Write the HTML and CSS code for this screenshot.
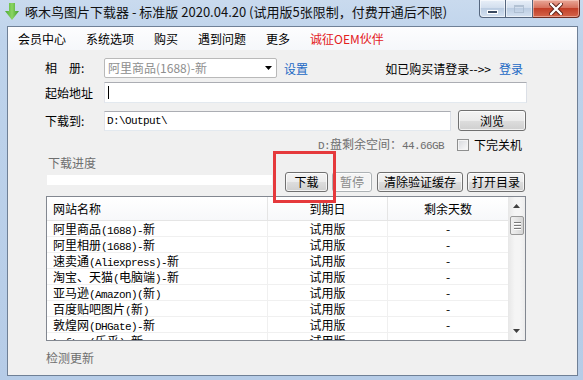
FILE: index.html
```html
<!DOCTYPE html>
<html lang="zh-CN">
<head>
<meta charset="utf-8">
<title>啄木鸟图片下载器</title>
<link rel="stylesheet" href="styles.css">
</head>
<body>
<div class="window">
  <div class="titlebar">
    <svg class="app-icon" width="14" height="18" viewBox="0 0 14 18">
      <defs>
        <linearGradient id="g" x1="0" y1="0" x2="1" y2="0">
          <stop offset="0" stop-color="#4aa832"/>
          <stop offset="0.5" stop-color="#8bd563"/>
          <stop offset="1" stop-color="#3f9c2a"/>
        </linearGradient>
      </defs>
      <path d="M4 0 H10 V8 H14 L7 17 L0 8 H4 Z" fill="url(#g)"/>
    </svg>
    <div class="title">啄木鸟图片下载器 - 标准版 2020.04.20 (试用版5张限制，付费开通后不限)</div>
    <div class="caption">
      <div class="cbtn min"><span class="min-glyph"></span></div>
      <div class="cbtn max"><span class="max-glyph"></span></div>
      <div class="cbtn close">
        <svg width="14" height="12" viewBox="0 0 14 12">
          <path d="M2 1 L12 11 M12 1 L2 11" stroke="#5a2018" stroke-width="4.2" stroke-linecap="round"/>
          <path d="M2 1 L12 11 M12 1 L2 11" stroke="#ffffff" stroke-width="2.4" stroke-linecap="round"/>
        </svg>
      </div>
    </div>
  </div>

  <div class="client">
    <div class="menubar">
      <span class="menu-item">会员中心</span>
      <span class="menu-item">系统选项</span>
      <span class="menu-item">购买</span>
      <span class="menu-item">遇到问题</span>
      <span class="menu-item">更多</span>
      <span class="menu-item red">诚征OEM伙伴</span>
    </div>

    <div class="main">
      <div class="row r1">
        <span class="lbl">相　册:</span>
        <div class="combo">
          <span class="combo-text">阿里商品(1688)-新</span>
          <svg class="caret" width="7" height="4" viewBox="0 0 7 4"><path d="M0 0 H7 L3.5 4 Z" fill="#000"/></svg>
        </div>
        <span class="link set">设置</span>
        <span class="spacer"></span>
        <span class="buy">如已购买请登录--&gt;&gt;</span>
        <span class="link login">登录</span>
      </div>

      <div class="row r2">
        <span class="lbl">起始地址</span>
        <div class="input wide"><span class="cursor"></span></div>
      </div>

      <div class="row r3">
        <span class="lbl">下载到:</span>
        <div class="input path"><span class="m">D:\Output\</span></div>
        <div class="btn browse">浏览</div>
      </div>

      <div class="row r4">
        <span class="disk"><span class="m">D:</span>盘剩余空间：<span class="m">44.66GB</span></span>
        <span class="chk"></span>
        <span class="chk-lbl">下完关机</span>
      </div>

      <div class="row r5">
        <div class="prog-col">
          <div class="prog-lbl">下载进度</div>
          <div class="prog-bar"></div>
        </div>
        <div class="btns">
          <div class="btn b-dl">下载</div>
          <div class="btn b-pause disabled">暂停</div>
          <div class="btn b-clear">清除验证缓存</div>
          <div class="btn b-open">打开目录</div>
        </div>
      </div>

      <div class="list">
        <div class="grid">
          <div class="hdr">
            <div class="c1">网站名称</div>
            <div class="c2">到期日</div>
            <div class="c3">剩余天数</div>
          </div>
          <div class="rows">
            <div class="lrow"><div class="c1">阿里商品<span class="m">(1688)-</span>新</div><div class="c2">试用版</div><div class="c3">-</div></div>
            <div class="lrow"><div class="c1">阿里相册<span class="m">(1688)-</span>新</div><div class="c2">试用版</div><div class="c3">-</div></div>
            <div class="lrow"><div class="c1">速卖通<span class="m">(Aliexpress)-</span>新</div><div class="c2">试用版</div><div class="c3">-</div></div>
            <div class="lrow"><div class="c1">淘宝、天猫<span class="m">(</span>电脑端<span class="m">)-</span>新</div><div class="c2">试用版</div><div class="c3">-</div></div>
            <div class="lrow"><div class="c1">亚马逊<span class="m">(Amazon)(</span>新<span class="m">)</span></div><div class="c2">试用版</div><div class="c3">-</div></div>
            <div class="lrow"><div class="c1">百度贴吧图片<span class="m">(</span>新<span class="m">)</span></div><div class="c2">试用版</div><div class="c3">-</div></div>
            <div class="lrow"><div class="c1">敦煌网<span class="m">(DHGate)-</span>新</div><div class="c2">试用版</div><div class="c3">-</div></div>
            <div class="lrow"><div class="c1"><span class="m">Lofter(</span>乐乎<span class="m">)-</span>新</div><div class="c2">试用版</div><div class="c3">-</div></div>
          </div>
        </div>
        <div class="vscroll">
          <div class="sarrow up"><svg width="7" height="4" viewBox="0 0 7 4"><path d="M0 4 H7 L3.5 0 Z" fill="#404040"/></svg></div>
          <div class="thumb"><span></span><span></span><span></span></div>
          <div class="strack"></div>
          <div class="sarrow down"><svg width="7" height="4" viewBox="0 0 7 4"><path d="M0 0 H7 L3.5 4 Z" fill="#404040"/></svg></div>
        </div>
      </div>

      <div class="footer">检测更新</div>
    </div>
  </div>

  <div class="highlight"></div>
</div>
</body>
</html>
```

FILE: styles.css
```css
* { box-sizing: border-box; }
html, body { margin: 0; padding: 0; }
body {
  width: 583px;
  height: 380px;
  overflow: hidden;
  font-family: "Noto Sans CJK SC", "Noto Sans", sans-serif;
  font-size: 12px;
  color: #000;
  background: #b9d0ea;
}
.m {
  font-family: "Liberation Mono", "DejaVu Sans Mono", monospace;
  font-size: 11px;
  letter-spacing: -0.6px;
}
.window {
  position: relative;
  width: 583px;
  height: 380px;
  display: flex;
  flex-direction: column;
  background: linear-gradient(to bottom, #c9daee 0, #bed3eb 40px, #b6cce7 100%);
}

/* title bar */
.titlebar {
  flex: none;
  height: 26px;
  display: flex;
  align-items: flex-start;
}
.app-icon { margin: 3px 0 0 5px; flex: none; }
.title {
  margin-left: 6px;
  font-size: 13px;
  line-height: 24px;
  color: #111;
  white-space: nowrap;
}
.caption {
  margin-left: auto;
  margin-right: 3px;
  display: flex;
  height: 18px;
}
.cbtn {
  height: 18px;
  border: 1px solid #56677f;
  border-top: none;
  display: flex;
  align-items: center;
  justify-content: center;
  background: linear-gradient(to bottom, #e8eff8 0%, #d3dfee 45%, #bccde2 50%, #d5e2f1 100%);
  box-shadow: inset 0 0 0 1px rgba(255,255,255,0.55);
}
.min { width: 26px; border-right: none; border-radius: 0 0 0 4px; }
.max { width: 28px; }
.close {
  width: 47px;
  border-left: none;
  border-color: #6d2c22;
  border-radius: 0 0 4px 0;
  background: linear-gradient(to bottom, #e9a898 0%, #d7725e 45%, #c23f28 50%, #d4654a 100%);
  box-shadow: inset 0 0 0 1px rgba(255,220,210,0.5);
}
.min-glyph {
  width: 11px;
  height: 4px;
  margin-top: 7px;
  background: #3a4a60;
  border: 1px solid #fff;
}
.max-glyph {
  width: 10px;
  height: 8px;
  border: 1px solid #a9b9cc;
  border-top-width: 2px;
  opacity: 0.8;
}

/* client */
.client {
  flex: 1;
  margin: 0 5px 4px 7px;
  border: 1px solid #6f8096;
  background: #f0f0f0;
  display: flex;
  flex-direction: column;
}
.menubar {
  flex: none;
  height: 23px;
  display: flex;
  align-items: center;
  background: linear-gradient(to bottom, #fdfdfe, #f5f7fa);
}
.menu-item {
  padding: 0 10px;
  line-height: 20px;
  white-space: nowrap;
}
.menu-item.red { color: #e3201c; }

.main {
  flex: 1;
  display: flex;
  flex-direction: column;
  padding: 8px 0 0 37px;
}
.row {
  width: 482px;
  display: flex;
  align-items: center;
  white-space: nowrap;
}
.lbl { width: 59px; flex: none; line-height: 16px; }
.link { color: #1b68c4; }

.r1 { height: 20px; padding-right: 4px; }
.combo {
  width: 173px;
  height: 20px;
  border: 1px solid #b9b9b9;
  border-radius: 2px;
  background: #fff;
  display: flex;
  align-items: center;
  padding: 0 4px 0 3px;
}
.combo-text { color: #8e8e8e; flex: 1; line-height: 16px; }
.caret { flex: none; }
.set { margin-left: 7px; }
.spacer { flex: 1; }
.login { margin-left: 8px; }

.input {
  height: 21px;
  background: #fff;
  border: 1px solid;
  border-color: #abadb3 #dbdfe6 #e3e9ef #e2e3ea;
  display: flex;
  align-items: center;
  padding-left: 2px;
}
.r2 { margin-top: 4px; height: 21px; }
.wide { width: 423px; }
.cursor { width: 1px; height: 13px; background: #000; margin-left: 1px; }

.r3 { margin-top: 7px; height: 21px; }
.path { width: 347px; height: 20px; align-self: flex-end; }
.btn {
  height: 20px;
  border: 1px solid #707070;
  border-radius: 3px;
  display: flex;
  align-items: center;
  justify-content: center;
  line-height: 16px;
  background: linear-gradient(to bottom, #f3f3f3 0%, #ebebeb 50%, #dddddd 51%, #cfcfcf 100%);
  box-shadow: inset 0 0 0 1px rgba(255,255,255,0.7);
}
.browse { width: 68px; height: 21px; margin-left: 7px; }

.r4 {
  margin-top: 7px;
  height: 13px;
  justify-content: flex-end;
  padding-right: 5px;
}
.disk { color: #6e6e6e; line-height: 13px; }
.chk {
  width: 12px;
  height: 12px;
  margin-left: 13px;
  border: 1px solid #8e8f8f;
  background: linear-gradient(135deg, #d6d8dc, #fbfbfb);
  box-shadow: inset 0 0 0 1px #f4f4f4;
}
.chk-lbl { margin-left: 5px; line-height: 13px; }

.r5 {
  margin-top: 4px;
  height: 37px;
  align-items: flex-end;
}
.prog-col {
  width: 225px;
  margin-left: 2px;
  margin-bottom: 7px;
}
.prog-lbl { color: #6e6e6e; line-height: 16px; padding-left: 1px; }
.prog-bar { margin-top: 4px; height: 10px; background: #fff; }
.btns { margin-left: 13px; display: flex; }
.b-dl { width: 43px; }
.b-pause { width: 40px; margin-left: 4px; }
.b-clear { width: 86px; margin-left: 5px; }
.b-open { width: 58px; margin-left: 4px; }
.btn.disabled {
  color: #8a8a8a;
  border-color: #adb2b5;
  background: #f4f4f4;
}

/* list */
.list {
  margin-top: 4px;
  margin-left: 1px;
  width: 480px;
  height: 145px;
  border: 1px solid #828790;
  background: #fff;
  display: flex;
}
.grid { width: 461px; overflow: hidden; }
.hdr, .lrow {
  display: grid;
  grid-template-columns: 221px 120px 120px;
}
.hdr {
  height: 24px;
  border-bottom: 1px solid #e5e5e5;
  background: linear-gradient(to bottom, #ffffff, #f7f8fa);
}
.hdr > div { line-height: 23px; border-right: 1px solid #e5e5e5; }
.hdr .c3 { border-right: none; }
.c1 { padding-left: 6px; white-space: nowrap; overflow: hidden; }
.c2, .c3 { text-align: center; }
.rows { height: 119px; overflow: hidden; }
.lrow {
  height: 16px;
  border-bottom: 1px solid #f0f0f0;
}
.lrow > div { line-height: 15px; }
.lrow .c1, .lrow .c2 { border-right: 1px solid #f0f0f0; }

.vscroll {
  width: 17px;
  display: flex;
  flex-direction: column;
  background: linear-gradient(to right, #e7e7e7, #f5f5f5 40%, #f5f5f5 70%, #ececec);
}
.sarrow {
  height: 17px;
  display: flex;
  align-items: center;
  justify-content: center;
  flex: none;
}
.thumb {
  height: 19px;
  margin: 2px 1px 0 2px;
  border: 1px solid #999;
  border-radius: 2px;
  background: linear-gradient(to right, #f1f1f1, #e4e4e4 50%, #d5d5d5);
  display: flex;
  flex-direction: column;
  align-items: center;
  justify-content: center;
  gap: 2px;
  flex: none;
}
.thumb span { width: 7px; height: 1px; background: #7a7a7a; box-shadow: 0 1px 0 #fff; }
.strack { flex: 1; }
.sarrow.down { margin-bottom: 1px; }

.footer {
  margin-top: 9px;
  padding-left: 1px;
  line-height: 16px;
  color: #6e6e6e;
}

/* annotation */
.highlight {
  position: absolute;
  left: 273px;
  top: 151px;
  width: 63px;
  height: 52px;
  border: 3px solid #e5393c;
}
```
